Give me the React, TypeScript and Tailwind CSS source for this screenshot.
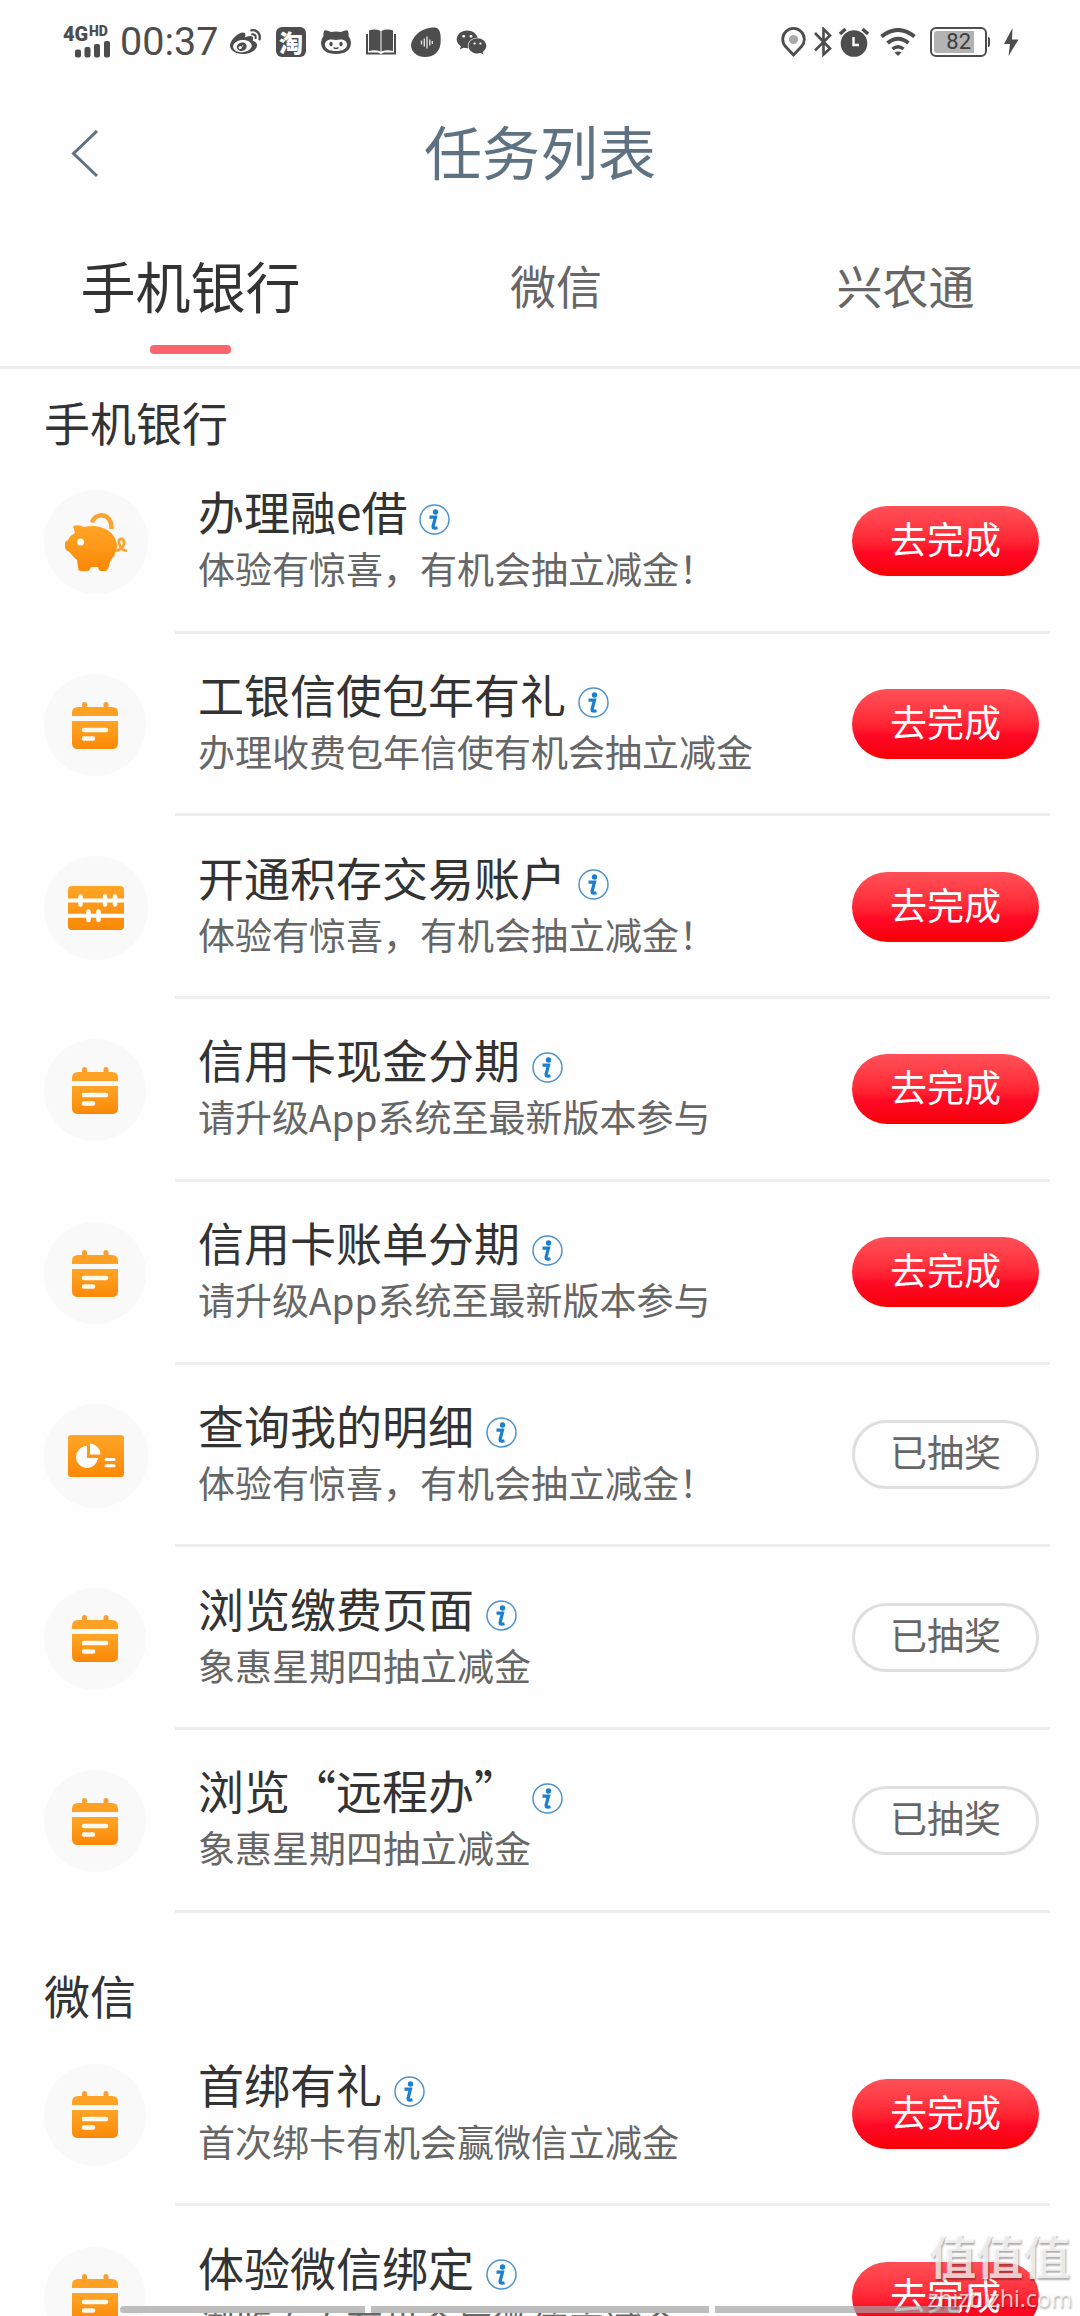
import { ReactNode } from 'react';
import { FaWeibo, FaWeixin } from 'react-icons/fa';

type IconName = 'pig' | 'calendar' | 'abacus' | 'report';

interface Task {
  icon: IconName;
  title: string;
  desc: string;
  done?: boolean;
}

interface Section {
  name: string;
  tasks: Task[];
}

const sections: Section[] = [
  {
    name: '手机银行',
    tasks: [
      { icon: 'pig', title: '办理融e借', desc: '体验有惊喜，有机会抽立减金！' },
      { icon: 'calendar', title: '工银信使包年有礼', desc: '办理收费包年信使有机会抽立减金' },
      { icon: 'abacus', title: '开通积存交易账户', desc: '体验有惊喜，有机会抽立减金！' },
      { icon: 'calendar', title: '信用卡现金分期', desc: '请升级App系统至最新版本参与' },
      { icon: 'calendar', title: '信用卡账单分期', desc: '请升级App系统至最新版本参与' },
      { icon: 'report', title: '查询我的明细', desc: '体验有惊喜，有机会抽立减金！', done: true },
      { icon: 'calendar', title: '浏览缴费页面', desc: '象惠星期四抽立减金', done: true },
      { icon: 'calendar', title: '浏览“远程办”', desc: '象惠星期四抽立减金', done: true },
    ],
  },
  {
    name: '微信',
    tasks: [
      { icon: 'calendar', title: '首绑有礼', desc: '首次绑卡有机会赢微信立减金' },
      { icon: 'calendar', title: '体验微信绑定', desc: '浏览页面有机会赢微信立减金' },
    ],
  },
];

/* Shared orange gradient for the task icons */
function OrangeDefs() {
  return (
    <svg className="absolute size-0" aria-hidden="true">
      <defs>
        <linearGradient id="orange" x1="0" y1="0" x2="0" y2="1">
          <stop offset="0" stopColor="#ffa526" />
          <stop offset="1" stopColor="#fb8807" />
        </linearGradient>
      </defs>
    </svg>
  );
}

const taskIcons: Record<IconName, ReactNode> = {
  pig: (
    <svg className="h-[58px] w-[64px]" viewBox="0 0 64 58" fill="none">
      <path d="M28 9.500C31 -1 48 -1 47.500 16" stroke="#fba333" strokeWidth="4.500" />
      <path
        d="M9 13C14 11 18 13 20 14C34 10 52 17 53 32C53 40 49 44 46 49L44 56Q43 58 41 58H37Q35 58 34.500 56L34 54H27L26 56Q25.500 58 23 58H17Q14.500 58 14.300 56L13 47C9 44 7 40 4 38Q1 37 1 34V30Q1 28 4 27C6 23 8 22 11 20Z"
        fill="url(#orange)"
      />
      <circle cx="16.500" cy="29" r="3.500" fill="#fff" />
      <path d="M52 38C57 37 61 32 60 28C58 24 54 26 55 30C56 34 58 38 63 37.500" stroke="#fba333" strokeWidth="2.800" />
    </svg>
  ),
  calendar: (
    <svg className="h-[47px] w-[46px]" viewBox="0 0 46 47">
      <path d="M10 6V2.500A2.500 2.500 0 0 1 15 2.500V6M31.500 6V2.500A2.500 2.500 0 0 1 36.500 2.500V6" fill="#f5a030" />
      <path d="M0 14V11Q0 5 6 5H40Q46 5 46 11V14Z" fill="#ffa124" />
      <path d="M0 19H46V41Q46 47 40 47H6Q0 47 0 41Z" fill="url(#orange)" />
      <path d="M12 28H34M12 36.500H21" stroke="#fffaf0" strokeWidth="4.600" strokeLinecap="round" />
    </svg>
  ),
  abacus: (
    <svg className="h-[44px] w-[56px]" viewBox="0 0 56 44">
      <rect width="56" height="44" rx="4" fill="url(#orange)" />
      <path d="M0 14.500H56M0 29.800H56" stroke="#fff" strokeWidth="4" />
      <path
        d="M12.500 10.500V18.500M37 10.500V18.500M47 10.500V18.500M20.500 25.500V34M30.500 25.500V34"
        stroke="#fff"
        strokeWidth="4.500"
        strokeLinecap="round"
      />
    </svg>
  ),
  report: (
    <svg className="h-[42px] w-[56px]" viewBox="0 0 56 42">
      <rect width="56" height="42" rx="3" fill="url(#orange)" />
      <path d="M19 11A11 11 0 1 0 30 23H19Z" fill="#fff" />
      <path d="M22 8.500A11 11 0 0 1 32.500 19.500H22Z" fill="#fff" />
      <path d="M38 24.500H46M38 30.800H46" stroke="#fff" strokeWidth="3" strokeLinecap="round" />
    </svg>
  ),
};

function InfoIcon() {
  return (
    <svg className="mt-[18px] ml-[12px] size-[31px]" viewBox="0 0 31 31" fill="none">
      <circle cx="15.500" cy="15.500" r="14.500" stroke="#4e93cc" strokeWidth="1.500" />
      <circle cx="16.500" cy="8" r="2.700" fill="#1b7fcf" />
      <path d="M10.500 13.200H16.500L14 22.500Q14 25 18.500 23.800" stroke="#1b7fcf" strokeWidth="3.200" />
    </svg>
  );
}

function StatusBar() {
  return (
    <div className="flex h-[84px] shrink-0 items-center pl-[63px] text-[#4d4d4d]">
      {/* Network type and signal */}
      <div className="relative h-[32px] w-[57px]">
        <span className="absolute top-0 left-0 font-[Roboto] text-[20px] leading-[16px] font-black">4G</span>
        <span className="absolute top-0 left-[26px] font-[Roboto] text-[14px] leading-[11px] font-black">HD</span>
        <svg className="absolute top-[15px] left-[12px]" width="36" height="17" viewBox="0 0 36 17" fill="currentColor">
          <rect x="0" y="8.500" width="6" height="8" rx="2" />
          <rect x="9.500" y="6" width="6" height="10.500" rx="2" />
          <rect x="19" y="3" width="6" height="13.500" rx="2" />
          <rect x="29" y="0" width="6" height="16.500" rx="2" />
        </svg>
      </div>
      <span className="w-[110px] font-[Roboto] text-[39.500px] leading-none">00:37</span>
      {/* Notification icons */}
      <div className="flex items-center gap-[15px]">
        <FaWeibo className="size-[31px]" />
        <div className="flex size-[30px] items-center justify-center rounded-[6px] bg-[#4d4d4d] text-[24px] leading-none font-black text-white">
          淘
        </div>
        <svg width="30" height="26" viewBox="0 0 30 26">
          <path
            d="M3 2Q4 0 10 3Q15 2 20 3Q26 0 27 2Q28 5 27.500 7Q30 10 30 14Q29 25 15 25Q1 25 0 14Q0 10 2.500 7Q2 5 3 2Z"
            fill="currentColor"
          />
          <path d="M15 11C21 9.500 26 11 26 15.500C26 20 21 22 15 22C9 22 4 20 4 15.500C4 11 9 9.500 15 11Z" fill="#fff" />
          <ellipse cx="10" cy="15" rx="1.700" ry="2.300" fill="currentColor" />
          <ellipse cx="20" cy="15" rx="1.700" ry="2.300" fill="currentColor" />
          <path d="M12.500 18.500Q15 20.500 17.500 18.500" stroke="currentColor" strokeWidth="1.400" fill="none" />
        </svg>
        <svg width="30" height="26" viewBox="0 0 30 26" fill="currentColor">
          <path d="M3 1.500Q9 -0.500 14.500 2V22.500Q9 20.500 3 22Z" />
          <path d="M27 1.500Q21 -0.500 15.500 2V22.500Q21 20.500 27 22Z" />
          <path d="M0 5H2V23.500H12L15 25L18 23.500H28V5H30V25.500H0Z" />
        </svg>
        <svg width="30" height="30" viewBox="0 0 30 30">
          <path d="M24 0.500C30 1 30 10 29.500 17C28 26 22 30 14 30C5 30 0 24 0 18C1 10 10 0 24 0.500Z" fill="currentColor" />
          <path d="M10.500 13.500V17.500M13.300 11.500V19.500M16 9.500V21.500M18.800 12.500V18.500M21.300 14V17" stroke="#ddd" strokeWidth="1.400" />
        </svg>
        <FaWeixin className="size-[31px]" />
      </div>
      {/* System icons */}
      <div className="ml-auto flex items-center pr-[61px]">
        <svg width="25" height="30" viewBox="0 0 25 30">
          <path d="M12.500 28L4.500 19.500A10.800 10.800 0 1 1 20.500 19.500Z" fill="none" stroke="currentColor" strokeWidth="2.800" />
          <circle cx="12.500" cy="12.500" r="4.600" fill="#aaa" />
        </svg>
        <svg className="ml-[8px]" width="18" height="30" viewBox="0 0 18 30" fill="none" stroke="currentColor" strokeWidth="2.600">
          <path d="M1 6L16 21.500L9.500 27.500V2L16 8.500L1 23.500" />
        </svg>
        <svg className="ml-[7px]" width="30" height="30" viewBox="0 0 30 30" fill="none">
          <circle cx="15" cy="16.500" r="13.300" fill="currentColor" />
          <path d="M1 7L6.500 2M29 7L23.500 2" stroke="currentColor" strokeWidth="3.400" />
          <path d="M14.500 10V18H20" stroke="#fff" strokeWidth="2.400" />
        </svg>
        <svg className="ml-[11px]" width="36" height="28" viewBox="0 0 36 28" fill="none" stroke="currentColor" strokeWidth="4">
          <path d="M1.500 8.500Q18 -4.500 34.500 8.500" />
          <path d="M7.500 15Q18 6.500 28.500 15" />
          <path d="M12.500 21Q18 16.500 23.500 21" strokeWidth="3.500" />
          <path d="M14.500 24.500Q18 22.500 21.500 24.500L18 28Z" fill="currentColor" stroke="none" />
        </svg>
        <div className="ml-[14px] flex h-[30px] w-[57px] items-center rounded-[6px] border-[2.500px] border-[#4d4d4d] p-[2px]">
          <div className="flex h-full w-[40px] items-center justify-end rounded-l-[3px] bg-[#b3b3b3] pr-[3px] font-[Roboto] text-[22px] leading-none text-[#3d3d3d]">
            82
          </div>
        </div>
        <div className="ml-px h-[10px] w-[2px] rounded-r-sm bg-[#4d4d4d]" />
        <svg className="ml-[14px]" width="15" height="28" viewBox="0 0 15 28" fill="currentColor">
          <path d="M8.500 0L0 16H6L4.500 28L14.500 11.500H8Z" />
        </svg>
      </div>
    </div>
  );
}

function PageHeader() {
  return (
    <header className="relative flex h-[136px] shrink-0 items-start justify-center text-[#5f7282]">
      <svg className="absolute top-[45px] left-[71px]" width="28" height="50" viewBox="0 0 28 50" fill="none">
        <path d="M26 2L2.500 24.500L26 47" stroke="currentColor" strokeWidth="3" />
      </svg>
      <h1 className="text-[58px] leading-[132px]">任务列表</h1>
    </header>
  );
}

function Tabs() {
  return (
    <nav className="flex h-[149px] shrink-0 border-b-[3px] border-[#ededed] text-[46px] leading-[129px] text-[#666]">
      <div className="flex w-[381px] flex-col items-center">
        <span className="h-[125px] text-[55px] text-[#333]">手机银行</span>
        <span className="h-[9px] w-[81px] rounded-[4px] bg-[#f9656f]" />
      </div>
      <span className="w-[350px] text-center">微信</span>
      <span className="w-[349px] text-center">兴农通</span>
    </nav>
  );
}

function TaskButton({ done }: { done?: boolean }) {
  if (done) {
    return (
      <button className="h-[69px] w-[187px] rounded-full border-[3px] border-[#dfdfdf] pb-[6px] text-[37px] leading-[57px] text-[#666]">
        已抽奖
      </button>
    );
  }
  return (
    <button className="h-[70px] w-[187px] rounded-full bg-linear-to-b from-[#ff4f58] via-[#ff0a26] via-65% to-[#f60000] pb-[6px] text-[37px] leading-[64px] text-white">
      去完成
    </button>
  );
}

function TaskRow({ icon, title, desc, done }: Task) {
  const round = icon === 'calendar' ? 'size-[102px]' : 'size-[104px]';
  return (
    <div className="flex h-[182.710px] shrink-0 pr-[30px] pl-[44px]">
      <div className="flex w-[131px] items-center">
        <div className={`flex items-center justify-center rounded-full bg-[#f9f9f9] ${round}`}>{taskIcons[icon]}</div>
      </div>
      <div className="flex flex-1 items-center justify-between border-b-[3px] border-[#ededed] pt-px pr-[11px] pl-[23px]">
        <div className="pb-[4px]">
          <div className="flex h-[58px] items-center text-[46px] leading-[58px] whitespace-nowrap text-[#333]">
            {title}
            <InfoIcon />
          </div>
          <p className="h-[58px] text-[37px] leading-[58px] whitespace-nowrap text-[#666]">{desc}</p>
        </div>
        <TaskButton done={done} />
      </div>
    </div>
  );
}

function Watermark() {
  return (
    <div className="absolute right-[8px] bottom-[4px] flex flex-col items-center text-white/75 [text-shadow:1px_2px_2px_rgba(0,0,0,0.32)]">
      <span className="h-[56px] text-[47px] leading-[52px] font-bold">值值值</span>
      <span className="font-['Open_Sans'] text-[23px] leading-[28px]">zhizhizhi.com</span>
    </div>
  );
}

export default function App() {
  return (
    <div
      lang="zh-CN"
      className="relative flex h-[2316px] w-[1080px] flex-col overflow-hidden bg-[#fefefe] font-['Noto_Sans_CJK_SC',sans-serif]"
    >
      <OrangeDefs />
      <StatusBar />
      <PageHeader />
      <Tabs />
      <main className="flex shrink-0 flex-col gap-[29px]">
        {sections.map((section) => (
          <section key={section.name}>
            <h2 className="h-[82px] pl-[44px] text-[46px] leading-[104px] text-[#333]">{section.name}</h2>
            {section.tasks.map((task) => (
              <TaskRow key={task.title} {...task} />
            ))}
          </section>
        ))}
      </main>

      {/* Gesture bar */}
      <div className="absolute bottom-[3px] left-[120px] flex h-[7px] w-[840px] gap-[6px] bg-white/60">
        <div className="w-[245px] rounded-l-full bg-[#bdbdbd]" />
        <div className="flex-1 bg-[#bdbdbd]" />
        <div className="w-[245px] rounded-r-full bg-black/25" />
      </div>
      <Watermark />
    </div>
  );
}
